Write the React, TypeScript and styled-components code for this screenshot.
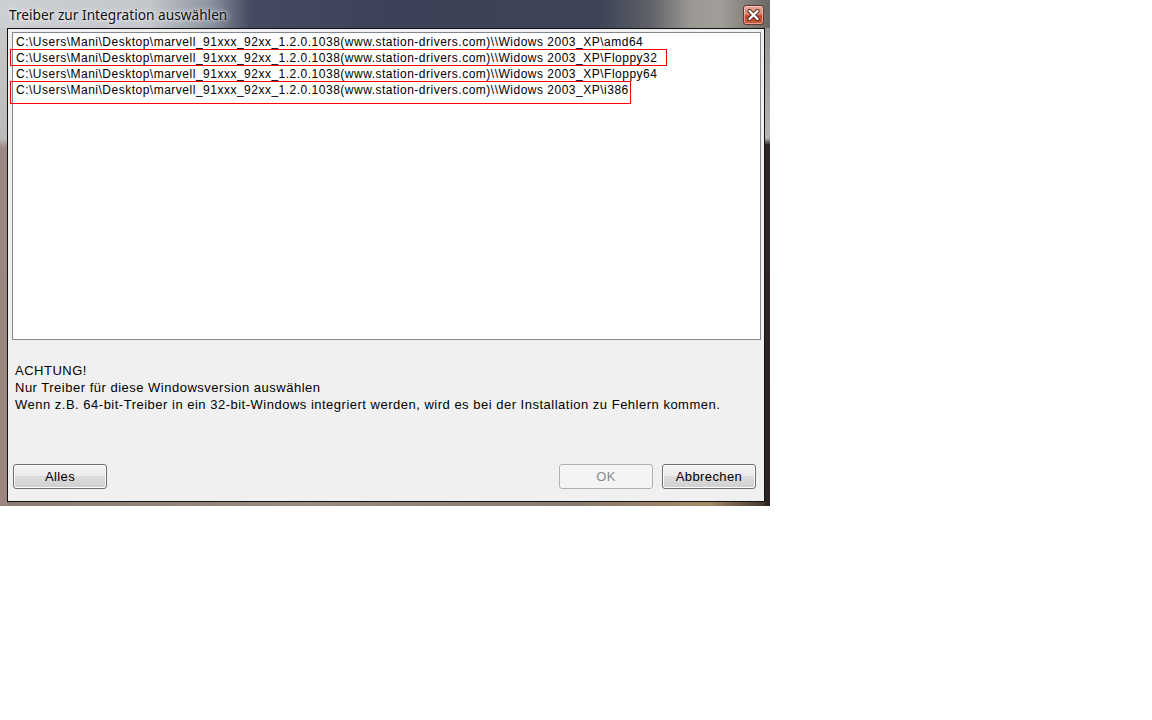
import React from "react";
import styled, { createGlobalStyle, css } from "styled-components";

const GlobalStyle = createGlobalStyle`
  html, body { margin: 0; padding: 0; background: #ffffff; }
  body { width: 1152px; height: 720px; overflow: hidden; }
  * { box-sizing: border-box; }
`;

const Window = styled.div`
  width: 770px;
  height: 506px;
  display: flex;
  flex-direction: column;
  padding: 0 5px 4px 7px;
  background:
    linear-gradient(to bottom, #c9cbcd 0, #bdbbb9 138px, #9c8882 148px, #9a857f 100%) left top / 7px 100% no-repeat,
    linear-gradient(to bottom, #8e8c8a 0, #b7b3af 138px, #2d2624 145px, #2a2321 100%) right top / 5px 100% no-repeat,
    linear-gradient(to right, #8d7a74 0, #9a8a82 40%, #8a7a6c 75%, #a58a66 92%, #3a2e28 100%) left bottom / 100% 4px no-repeat,
    #3c4357;
  font-family: "Liberation Sans", Arial, sans-serif;
`;

const TitleBar = styled.div`
  height: 28px;
  margin: 0 -5px 0 -7px;
  padding: 0 6px 0 9px;
  display: flex;
  align-items: center;
  justify-content: space-between;
  background: linear-gradient(
    to right,
    #cdd0d3 0,
    #c3c6ca 150px,
    #8d93a0 210px,
    #444b61 250px,
    #3b4257 400px,
    #3d4457 600px,
    #5f6168 650px,
    #9b9894 690px,
    #a19d98 720px,
    #77736f 760px,
    #6a6662 770px
  );
`;

const Title = styled.span`
  font-family: "Noto Sans", "Open Sans", sans-serif;
  font-size: 13.7px;
  color: #111;
  text-shadow: 0 0 6px rgba(255, 255, 255, 0.9), 0 0 3px rgba(255, 255, 255, 0.8);
  margin-top: 1px;
`;

const CloseButton = styled.div`
  width: 21px;
  height: 20px;
  margin-top: 2px;
  border: 1px solid #5d3a34;
  border-radius: 3px;
  background: linear-gradient(to bottom, #e9a998 0, #d98770 45%, #c1442a 55%, #cc5c3e 100%);
  box-shadow: inset 0 0 0 1px rgba(255, 220, 210, 0.55);
  display: flex;
  align-items: center;
  justify-content: center;
`;

const Client = styled.div`
  flex: 1;
  display: flex;
  flex-direction: column;
  border: 1px solid #121212;
  background: #f0f0f0;
  padding: 3px 3px 12px 4px;
`;

const ListBox = styled.div`
  height: 308px;
  border: 1px solid #828790;
  background: #ffffff;
  padding: 1px 0 0 3px;
  display: flex;
  flex-direction: column;
`;

const Row = styled.div`
  height: 16px;
  line-height: 16px;
  font-size: 12px;
  letter-spacing: 0.5px;
  color: #000;
  white-space: nowrap;
`;

const ItemText = styled.span`
  position: relative;
  display: inline-block;
`;

const MarkFrame = styled.span<{ $tall?: boolean; $extend: number }>`
  position: absolute;
  left: -6px;
  right: ${(p) => -p.$extend}px;
  top: -1px;
  height: ${(p) => (p.$tall ? 23 : 17)}px;
  border: 1px solid #ff0000;
  pointer-events: none;
`;

const Message = styled.div`
  margin-top: 22px;
  padding-left: 3px;
  font-size: 13px;
  letter-spacing: 0.5px;
  line-height: 17px;
  color: #000;
`;

const ButtonRow = styled.div`
  margin-top: auto;
  display: flex;
  align-items: center;
  gap: 9px;
  padding: 0 5px 0 1px;
`;

const Spacer = styled.div`
  flex: 1;
`;

const Button = styled.button<{ $disabled?: boolean }>`
  width: 94px;
  height: 25px;
  padding: 0;
  border-radius: 3px;
  font-family: "Liberation Sans", Arial, sans-serif;
  font-size: 13px;
  letter-spacing: 0.4px;
  cursor: default;
  ${(p) =>
    p.$disabled
      ? css`
          border: 1px solid #adb2b5;
          background: #f4f4f4;
          color: #8a8a8a;
        `
      : css`
          border: 1px solid #707070;
          background: linear-gradient(to bottom, #f2f2f2 0, #ebebeb 50%, #dddddd 50%, #cfcfcf 100%);
          box-shadow: inset 0 0 0 1px #fcfcfc;
          color: #000;
        `}
`;

type Item = { name: string; mark?: { tall: boolean; extend: number } };

const items: Item[] = [
  { name: "amd64" },
  { name: "Floppy32", mark: { tall: false, extend: 10 } },
  { name: "Floppy64" },
  { name: "i386", mark: { tall: true, extend: 2 } },
];

const base = "C:\\Users\\Mani\\Desktop\\marvell_91xxx_92xx_1.2.0.1038(www.station-drivers.com)\\\\Widows 2003_XP\\";

export default function App() {
  return (
    <>
      <GlobalStyle />
      <Window>
        <TitleBar>
          <Title>Treiber zur Integration auswählen</Title>
          <CloseButton>
            <svg width="13" height="12" viewBox="0 0 13 12">
              <path d="M2.5 2 L10.5 10 M10.5 2 L2.5 10" stroke="#4a2a24" strokeWidth="4.2" strokeLinecap="round" />
              <path d="M2.5 2 L10.5 10 M10.5 2 L2.5 10" stroke="#ffffff" strokeWidth="2.4" strokeLinecap="round" />
            </svg>
          </CloseButton>
        </TitleBar>
        <Client>
          <ListBox>
            {items.map((it) => (
              <Row key={it.name}>
                <ItemText>
                  {base + it.name}
                  {it.mark && <MarkFrame $tall={it.mark.tall} $extend={it.mark.extend} />}
                </ItemText>
              </Row>
            ))}
          </ListBox>
          <Message>
            ACHTUNG!
            <br />
            Nur Treiber für diese Windowsversion auswählen
            <br />
            Wenn z.B. 64-bit-Treiber in ein 32-bit-Windows integriert werden, wird es bei der Installation zu Fehlern kommen.
          </Message>
          <ButtonRow>
            <Button>Alles</Button>
            <Spacer />
            <Button $disabled>OK</Button>
            <Button>Abbrechen</Button>
          </ButtonRow>
        </Client>
      </Window>
    </>
  );
}
